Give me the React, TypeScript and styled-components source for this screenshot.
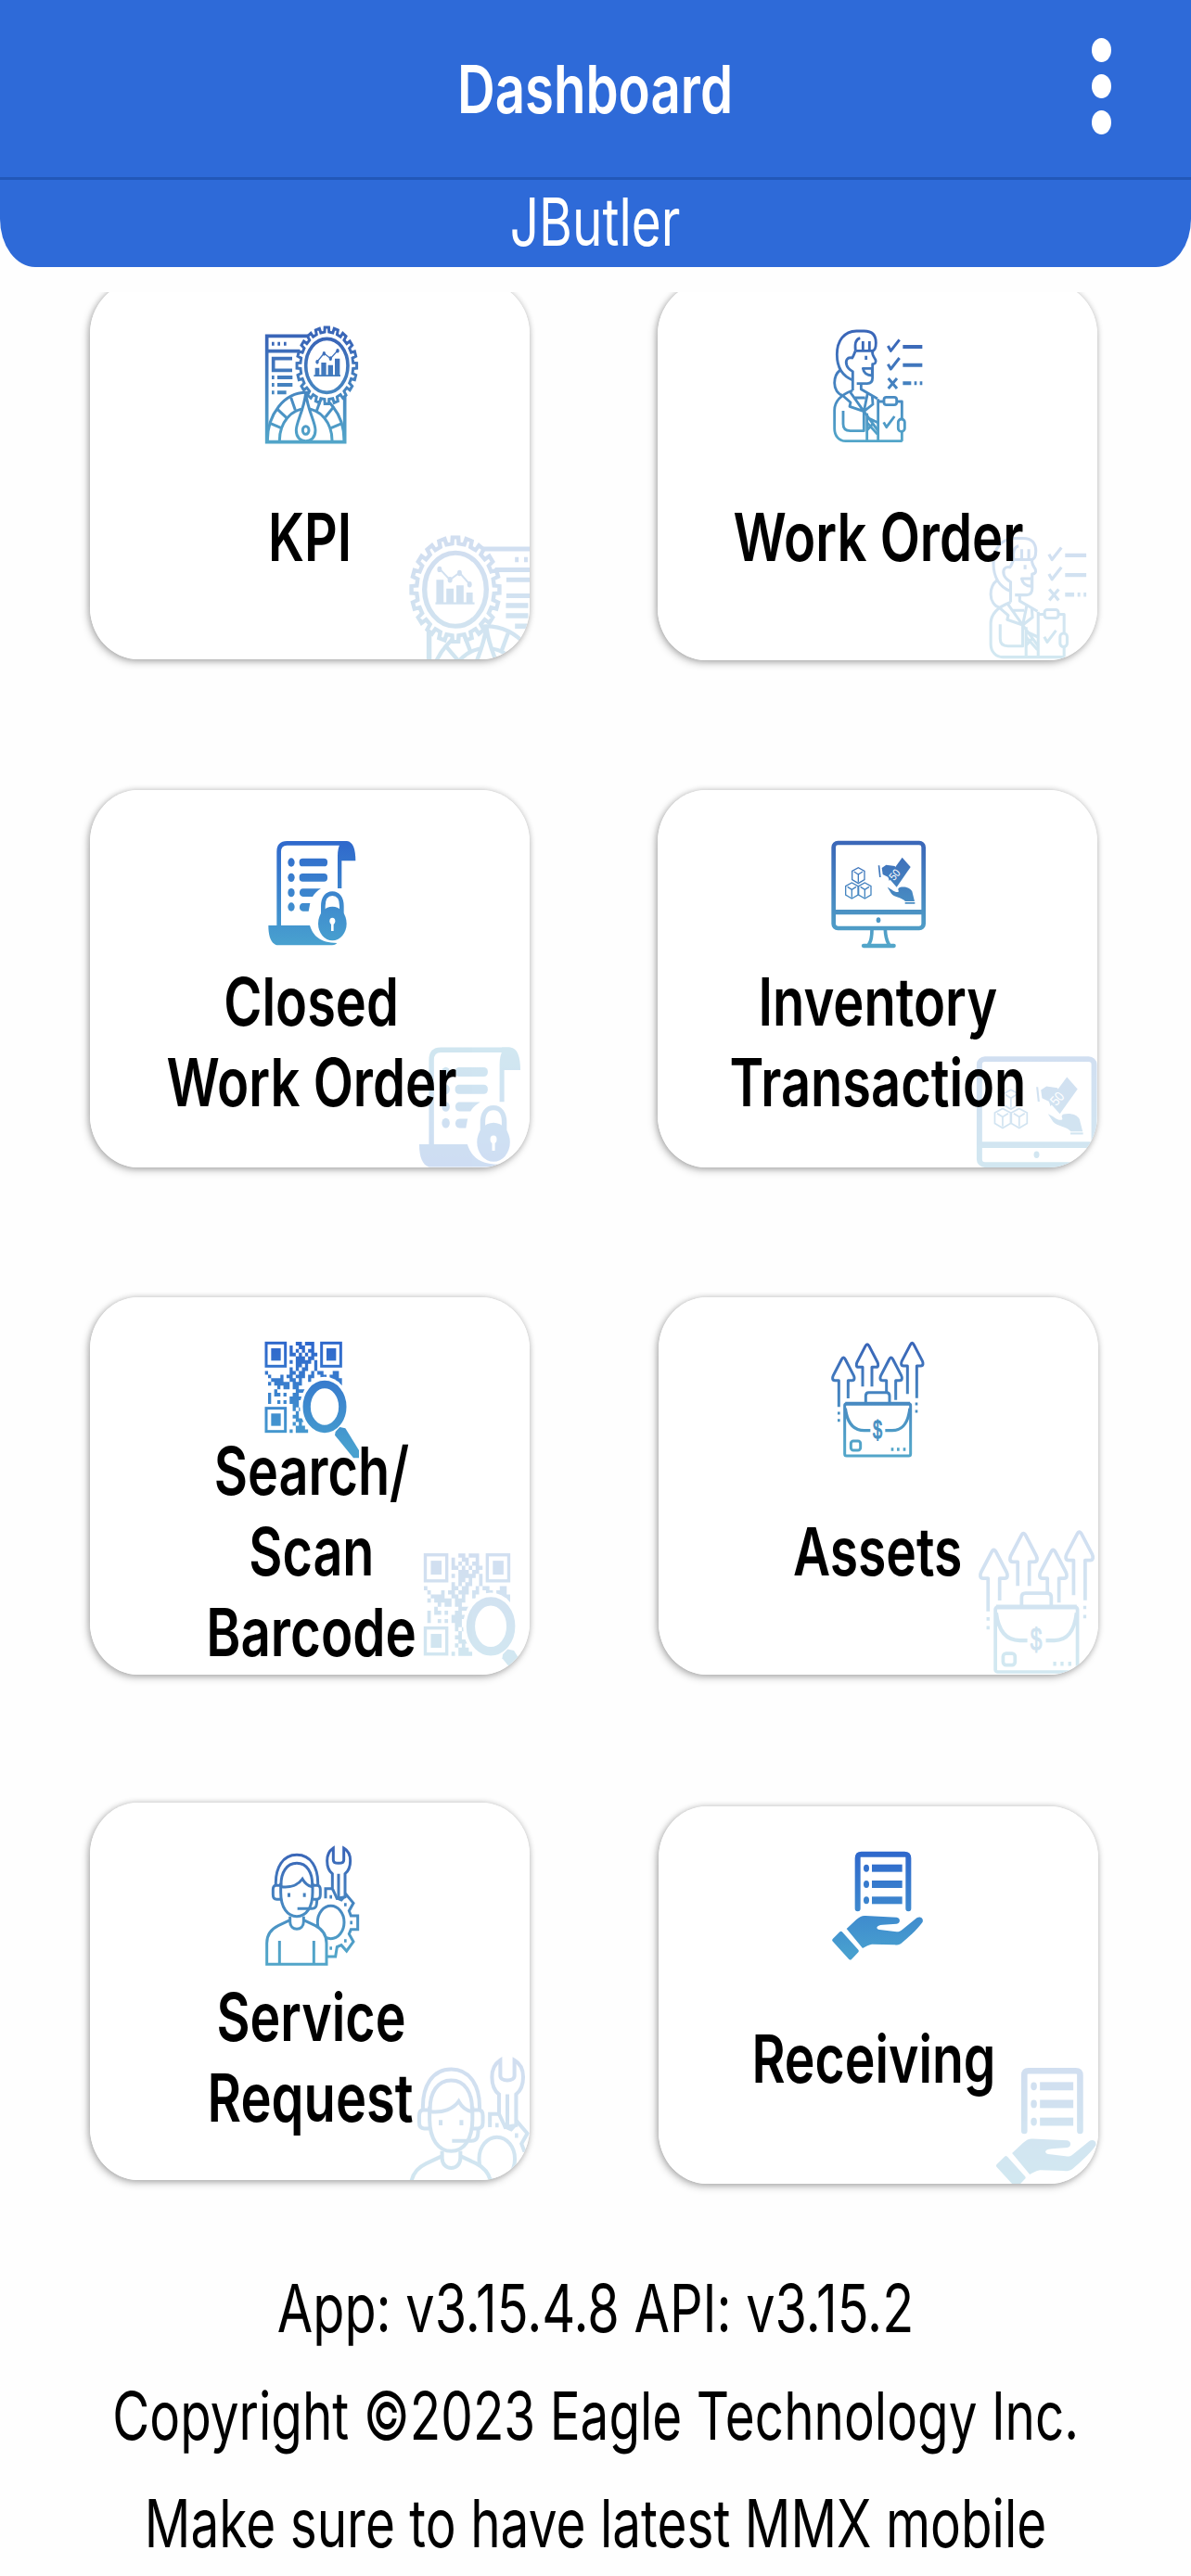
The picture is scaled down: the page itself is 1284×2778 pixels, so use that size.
import type { ReactNode } from "react";
import styled, { createGlobalStyle } from "styled-components";

const GlobalStyle = createGlobalStyle`
  body {
    margin: 0;
    background: #fefefe;
  }
`;

const StyledScreen = styled.div`
  display: flex;
  flex-direction: column;
  width: 1284px;
  height: 2778px;
  overflow: hidden;
  background: #fefefe;
  font-family: Inter, "Liberation Sans", sans-serif;
  font-feature-settings: "calt" 0;
  font-size: 71.5px;
  color: #000;
`;

const StyledHeader = styled.header`
  height: 288px;
  flex-shrink: 0;
  background: #2e6ad8;
  border-radius: 0 0 38px 38px / 0 0 52px 52px;
  color: #fff;
`;

const StyledTitleBar = styled.div`
  display: grid;
  grid-template-columns: 194px 1fr 194px;
  align-items: center;
  justify-items: center;
  height: 191px;
  border-bottom: 3px solid #2257b8;
`;

const StyledTitle = styled.h1`
  grid-column: 2;
  margin: 0;
  font-size: inherit;
  font-weight: 600;
  line-height: 90px;
`;

const StyledMenuButton = styled.button`
  display: flex;
  flex-direction: column;
  gap: 13px;
  padding: 0;
  margin-top: -5px;
  border: 0;
  background: none;

  span {
    width: 21px;
    height: 26px;
    border-radius: 50%;
    background: #fff;
  }
`;

const StyledUser = styled.div`
  display: flex;
  justify-content: center;
  line-height: 91px;
`;

const StyledLine = styled.span<{ $scale: number }>`
  display: block;
  white-space: nowrap;
  transform: scaleX(${(p) => p.$scale});
`;

const StyledScroll = styled.main`
  flex: 1;
  min-height: 0;
  margin-top: 27px;
  overflow: hidden;
`;

const StyledGrid = styled.div`
  display: grid;
  grid-template-columns: 474px 474px;
  grid-auto-rows: 407px;
  gap: 140px 138px;
  margin: -11px 0 0 97px;
`;

const StyledCardShadow = styled.div<{ $x?: number; $y?: number }>`
  width: 474px;
  height: 407px;
  margin: ${(p) => p.$y || 0}px 0 0 ${(p) => p.$x || 0}px;
  border-radius: 52px / 56px;
  box-shadow: -2px 3px 8px rgba(0, 0, 0, 0.26), 0 0 6px rgba(0, 0, 0, 0.18);
`;

const StyledCard = styled.div`
  position: relative;
  height: 100%;
  border-radius: inherit;
  background: #fff;
  overflow: hidden;
`;

const StyledWatermark = styled.svg`
  position: absolute;
  inset: 0;
  width: 100%;
  height: 100%;
`;

const StyledIconSlot = styled.div`
  display: flex;
  justify-content: center;
  height: 97px;
  padding-top: 45px;

  svg {
    flex-shrink: 0;
    width: 110px;
    height: 140px;
  }
`;

const StyledLabel = styled.div<{ $shift: [number, number] }>`
  display: flex;
  flex-direction: column;
  align-items: center;
  justify-content: center;
  height: 264px;
  font-weight: 600;
  line-height: 87px;
  transform: translate(${(p) => p.$shift[0]}px, ${(p) => p.$shift[1]}px);
`;

const StyledFooter = styled.footer`
  display: flex;
  flex-direction: column;
  align-items: center;
  margin-top: 79px;
  line-height: 116px;
`;

// Toothed outline used for the cog on the KPI icon
const cogPath = (cx: number, cy: number, rx: number, ry: number, teeth: number) => {
  const points: string[] = [];
  const step = (Math.PI * 2) / teeth;
  for (let i = 0; i < teeth; i++) {
    const a = i * step - Math.PI / 2;
    [
      [-0.27, 0.88],
      [-0.21, 1],
      [0.21, 1],
      [0.27, 0.88],
    ].forEach(([t, r]) => {
      const x = cx + Math.cos(a + t * step) * rx * r;
      const y = cy + Math.sin(a + t * step) * ry * r;
      points.push(`${x.toFixed(1)} ${y.toFixed(1)}`);
    });
  }
  return `M${points.join("L")}Z`;
};

const KpiArt = ({ ink }) => (
  <g fill="none" stroke={ink} strokeWidth="9">
    <path d="M760 187H623V530H875V380M623 236H730" strokeWidth="11" />
    <path d="M639 212h8M658 212h8M678 212h8" strokeWidth="12" />
    <path d="M705 260H644V298H705" strokeWidth="11" />
    <path
      d="M639 321h8M657 321h49M639 345h8M657 345h49M639 370h8M657 370h29"
      strokeWidth="12"
    />
    <path d="M625 525A124 155 0 0 1 873 525M664 525A85 103 0 0 1 834 525" />
    <path d="M635 470L670 485M655 422L687 452M701 386L715 427M866 470L830 485M840 415L812 450M798 390L784 430" />
    <path
      d="M749 372C742 430 718 466 718 492C718 515 732 527 749 527C766 527 780 515 780 492C780 466 756 430 749 372Z"
      fill="#fff"
    />
    <ellipse cx="749" cy="492" rx="10" ry="13" />
    <path d={cogPath(817, 283, 97, 124, 20)} fill="#fff" />
    <ellipse cx="817" cy="283" rx="68" ry="87" strokeWidth="11" />
    <path d="M786 270L808 243L829 260L852 234" strokeWidth="4" />
    <g fill={ink} stroke="none">
      <ellipse cx="786" cy="271" rx="5" ry="7" />
      <ellipse cx="808" cy="244" rx="5" ry="7" />
      <ellipse cx="829" cy="260" rx="5" ry="7" />
      <ellipse cx="852" cy="235" rx="5" ry="7" />
      <path d="M779 290h14v26h-14zM799 273h16v43h-16zM821 281h16v35h-16zM843 260h16v56h-16zM775 313h86v5h-86z" />
    </g>
  </g>
);

const WorkOrderArt = ({ ink }) => (
  <g fill="none" stroke={ink} strokeWidth="8.5" strokeLinejoin="round">
    <path d="M688 333C655 320 637 290 637 250C637 205 660 175 700 174H725C752 174 763 190 763 212C763 228 760 238 750 238H698" />
    <path d="M712 197C697 200 694 215 697 238M721 207V237M742 207V237" />
    <path d="M697 238C692 247 692 254 686 261C670 257 664 270 668 283C671 295 680 300 688 305V366" />
    <path d="M752 238C749 250 756 256 762 268C764 276 760 281 752 281V325C752 338 745 344 735 344H701" />
    <path d="M731 254v13" />
    <path d="M721 295H751V318C735 318 724 312 721 295Z" />
    <path d="M648 300C632 312 629 325 629 342C629 362 640 378 655 382" />
    <path d="M715 347V362L768 393M688 366C650 380 629 400 629 430V490C629 515 645 530 665 530H848" />
    <path d="M657 432V475C657 490 665 497 680 497H724V436" />
    <path d="M680 372L724 434L678 418L681 405L657 384M690 390H728M736 376L724 434M751 385L753 411L724 434" />
    <path d="M734 440V528M724 434L770 497M738 455L769 470M734 470L768 508M734 495L752 475" />
    <path d="M770 394V528M770 402H789M830 402H847V458M847 500V530" />
    <rect x="789" y="388" width="41" height="25" rx="8" />
    <rect x="835" y="459" width="21" height="40" rx="10" />
    <path d="M788 469L797 485L823 450" />
    <path
      d="M802 222L811 238L839 202M802 281L811 297L839 261M803 327L831 360M831 327L803 360"
      strokeWidth="9"
    />
    <path
      d="M850 225H913M850 284H913M850 343H877M887 343h8M905 343h8"
      strokeWidth="12"
    />
  </g>
);

const ClosedOrderArt = ({ ink }) => (
  <g fill={ink}>
    <path
      d="M662 478V236C662 217 671 208 688 208H880"
      fill="none"
      stroke={ink}
      strokeWidth="14"
    />
    <path d="M858 201H882C902 203 910 228 910 265H865V354H852V250C852 232 855 217 862 207Z" />
    {[270, 319, 368, 414].map((y) => (
      <ellipse key={y} cx="702" cy={y} rx="11" ry="14" />
    ))}
    <rect x="728" y="257" width="91" height="26" rx="11" />
    <rect x="728" y="306" width="91" height="26" rx="11" />
    <path d="M740 355H798C786 362 777 371 771 381H740C725 381 725 355 740 355Z" />
    <path d="M740 402H763L758 428H740C725 428 725 402 740 402Z" />
    <path d="M628 474H762C773 508 795 530 850 531C845 537 838 538 825 538H655C637 532 628 510 628 474Z" />
    <path
      d="M805 440V412C805 386 817 371 835 371C853 371 865 386 865 412V440"
      fill="none"
      stroke={ink}
      strokeWidth="14"
    />
    <ellipse cx="835" cy="468" rx="46" ry="55" />
    <ellipse cx="835" cy="460" rx="9" ry="11" fill="#fff" />
    <path d="M831 462h8v30h-8z" fill="#fff" />
  </g>
);

const cubes = [
  [706, 312],
  [685, 361],
  [727, 361],
];

const InventoryArt = ({ ink }) => (
  <g fill="none" stroke={ink}>
    <rect x="626" y="207" width="291" height="276" rx="14" strokeWidth="14" />
    <path d="M626 431H917" strokeWidth="16" />
    <ellipse cx="771" cy="457" rx="7" ry="9" fill={ink} stroke="none" />
    <path
      d="M750 488C750 510 748 525 739 537M793 488C794 510 798 525 806 537"
      strokeWidth="11"
    />
    <path d="M723 540H821" strokeWidth="13" strokeLinecap="round" />
    {cubes.map(([x, y]) => (
      <path
        key={`${x}-${y}`}
        d={`M${x - 20} ${y - 14}L${x} ${y - 25}L${x + 20} ${y - 14}V${y + 14}L${x} ${y + 26}L${x - 20} ${y + 14}ZM${x - 14} ${y - 12}L${x} ${y - 3}L${x + 14} ${y - 12}M${x} ${y - 3}V${y + 22}`}
        strokeWidth="4"
      />
    ))}
    <g fill={ink} stroke="none">
      <path d="M770 280h5l4 38h-5zM782 288L796 278L824 282L832 300L806 330L803 318L785 309Z" />
      <path d="M848 254L875 285L830 350L802 318Z" />
      <path d="M800 350C814 356 824 368 834 366C842 364 828 356 840 351C856 347 874 352 880 364L888 396H858C846 382 824 384 813 371Z" />
      <path d="M857 399h32v5h-32z" />
    </g>
    <text
      transform="translate(821 331) rotate(-48) scale(0.9 1.05)"
      fill="#fff"
      stroke="none"
      fontFamily="Liberation Sans, sans-serif"
      fontSize="34"
    >
      50
    </text>
  </g>
);

const modules = [
  "..........XX.XXX.........",
  "........X..XX..X.........",
  "........X.X.X.XX.........",
  "........XX.X.X.XX........",
  "..........XXX.XX.........",
  "........X.XXXXX.X........",
  "..........XX.X..X........",
  "........X.X.XX..X........",
  "X.......XX.XX..X.XX...XX.",
  ".X...X.XX.XXX.XX..XX.XXX.",
  "..XXXX..XX.X..X......XXXX",
  ".X.XXXXX.XXX............X",
  "....X.XX.XX..............",
  "...X......XXX............",
  ".X.XX.X..XX..............",
  ".X......XXXX.............",
  ".X..X.X.XXX..............",
  ".........XX..............",
  ".........X.X.............",
  "..........X..............",
  ".........XX..............",
  "..........XXX............",
  ".........X.X.............",
  "..........XXX............",
  "........X.XXXX...........",
];

const modulePath = modules
  .map((row, r) =>
    row
      .split("")
      .map((c, i) => (c === "X" ? `M${617 + i * 9.96} ${187 + r * 11.8}h10v11.9h-10z` : ""))
      .join("")
  )
  .join("");

const BarcodeArt = ({ ink }) => (
  <g fill={ink}>
    <path d={modulePath} />
    {[
      [617, 187],
      [796, 187],
      [617, 398],
    ].map(([x, y]) => (
      <g key={`${x}-${y}`}>
        <rect
          x={x + 4}
          y={y + 4}
          width="62"
          height="75"
          fill="none"
          stroke={ink}
          strokeWidth="9"
        />
        <rect x={x + 20} y={y + 21} width="31" height="40" />
      </g>
    ))}
    <ellipse cx="810" cy="397" rx="80" ry="97" fill="#fff" />
    <ellipse
      cx="810"
      cy="397"
      rx="58"
      ry="72"
      fill="none"
      stroke={ink}
      strokeWidth="25"
    />
    <path d="M843 489L845 478L859 463L877 467L921 538V563H903Z" />
  </g>
);

// x, y of the tip, then the lower end of the left and right stem
const arrows = [
  [658, 236, 398, 370],
  [735, 193, 332, 332],
  [812, 236, 350, 375],
  [880, 189, 356, 369],
];

const AssetsArt = ({ ink }) => (
  <g fill="none" stroke={ink} strokeWidth="9" strokeLinejoin="round">
    {arrows.map(([x, y, left, right]) => (
      <path
        key={x}
        d={`M${x - 15} ${left}V${y + 76}H${x - 28}C${x - 37} ${y + 76} ${x - 36} ${y + 66} ${x - 33} ${y + 60}L${x - 6} ${y + 8}Q${x} ${y - 4} ${x + 6} ${y + 8}L${x + 33} ${y + 60}C${x + 36} ${y + 66} ${x + 37} ${y + 76} ${x + 28} ${y + 76}H${x + 15}V${right}`}
      />
    ))}
    <path d="M639 418h8M639 441h8M890 388h8M890 412h8" strokeWidth="9" />
    <rect x="662" y="387" width="213" height="169" rx="6" />
    <path d="M664 387H873" strokeWidth="12" />
    <path d="M730 383V362C730 354 733 351 740 351H797C804 351 807 354 807 362V383" />
    <path
      d="M664 402C670 450 690 474 725 474H745M873 402C867 450 850 474 815 474H793"
      strokeWidth="10"
    />
    <rect x="682" y="508" width="31" height="30" rx="8" strokeWidth="9" />
    <path d="M812 535h8M831 535h8M851 535h8" strokeWidth="11" />
    <text
      transform="translate(768 499) scale(0.8 1.2)"
      textAnchor="middle"
      fill="#4690c2"
      stroke="#4690c2"
      strokeWidth="2.5"
      fontFamily="Liberation Sans, sans-serif"
      fontSize="68"
    >
      $
    </text>
  </g>
);

const ServiceArt = ({ ink }) => (
  <g fill="none" stroke={ink} strokeWidth="9">
    <path d="M813 350V318H846L850 349L864 355L880 338L903 365L889 390L895 406H917V450H895L889 465L903 490L881 520L864 501L850 507L845 538H818" />
    <ellipse cx="830" cy="427" rx="43" ry="53" />
    <path d="M826 345h8M873 370h8M892 428h8M873 487h8M826 511h8" strokeWidth="11" />
    <path
      d="M835 318V270C822 260 818 245 818 228C818 210 826 195 838 187V225C838 232 845 236 855 236C865 236 872 232 872 225V187C886 195 893 210 893 228C893 245 888 260 876 270V345L850 350Z"
      fill="#fff"
    />
    <path d="M855 270V350" />
    <path
      d="M698 420L660 438C635 450 623 470 623 495V563H816V495C816 470 803 450 780 438L742 420"
      fill="#fff"
    />
    <path d="M664 487V560M775 487V560" />
    <path d="M698 408V425C698 440 708 449 720 449C732 449 742 440 742 425V408" />
    <path d="M668 300V330C668 380 690 408 720 408C750 408 771 380 771 330V300" fill="#fff" />
    <path d="M652 306C650 250 675 209 720 209C765 209 790 250 788 306M669 312C667 265 688 236 720 236C752 236 772 265 770 312" />
    <path d="M670 312C700 316 725 305 738 287C745 300 757 310 770 312" />
    <path d="M667 308H653C645 308 643 315 643 322V338C643 347 647 353 655 353H667M772 308H786C794 308 796 315 796 322V338C796 347 792 353 784 353H772" />
    <path d="M690 339h9M740 339h9" strokeWidth="13" />
    <path d="M722 383H768C782 383 785 375 785 353" />
  </g>
);

const ReceivingArt = ({ ink }) => (
  <g fill={ink}>
    <path
      d="M704 385V222C704 212 708 209 716 209H855C864 209 868 212 868 222V385"
      fill="none"
      stroke={ink}
      strokeWidth="18"
      strokeLinecap="round"
    />
    {[254, 306, 358].map((y) => (
      <g key={y}>
        <ellipse cx="732" cy={y} rx="9" ry="12" />
        <rect x="750" y={y - 12} width="98" height="24" />
      </g>
    ))}
    <path d="M668 450L700 420C712 410 718 407 730 408L830 413C843 415 843 432 830 434L785 437C762 438 762 451 775 453L830 460C838 460 842 458 848 453L895 415C905 408 918 415 914 428C895 455 865 480 845 497C835 503 828 503 820 502L750 500C738 502 730 508 720 513Z" />
    <path
      d="M627 487L650 464L702 522L680 545Z"
      stroke={ink}
      strokeWidth="11"
      strokeLinejoin="round"
    />
  </g>
);

type Tile = {
  id: string;
  Art: (props: { ink: string }) => ReactNode;
  lines: [string, number][];
  shift: [number, number];
  // top left corner of the card in artwork units (three to a pixel)
  origin: [number, number];
  colors: [string, string];
  faded: [string, string];
  watermark: string;
  x?: number;
  y?: number;
};

const dark: [string, string] = ["#3a66b8", "#52a5c9"];
const vivid: [string, string] = ["#2f68cc", "#48a0cf"];
const pale: [string, string] = ["#4a80c6", "#4ca4c6"];

const tiles: Tile[] = [
  {
    id: "kpi",
    Art: KpiArt,
    lines: [["KPI", 0.775]],
    shift: [0, 1],
    origin: [51, 12],
    colors: dark,
    faded: pale,
    watermark: "translate(2434 621) scale(-1.47 1.365)",
  },
  {
    id: "work-order",
    Art: WorkOrderArt,
    lines: [["Work Order", 0.786]],
    shift: [1, 0],
    origin: [57, 18],
    colors: dark,
    faded: pale,
    watermark: "translate(450 656.4) scale(1.088 1.08)",
    y: 1,
  },
  {
    id: "closed-work-order",
    Art: ClosedOrderArt,
    lines: [
      ["Closed", 0.782],
      ["Work Order", 0.786],
    ],
    shift: [2, -2],
    origin: [51, 36],
    colors: vivid,
    faded: ["#48a0c6", "#3f7bd0"],
    watermark: "translate(387.5 638) scale(1.16 1.148)",
    y: 1,
  },
  {
    id: "inventory",
    Art: InventoryArt,
    lines: [
      ["Inventory", 0.784],
      ["Transaction", 0.782],
    ],
    shift: [0, -2],
    origin: [57, 36],
    colors: dark,
    faded: pale,
    watermark: "translate(299.5 650.6) scale(1.275 1.237)",
    y: 1,
  },
  {
    id: "barcode",
    Art: BarcodeArt,
    lines: [
      ["Search/", 0.78],
      ["Scan", 0.778],
      ["Barcode", 0.79],
    ],
    shift: [2, 0],
    origin: [51, 43],
    colors: vivid,
    faded: pale,
    watermark: "translate(440 662) scale(1.12 1.122)",
    y: 1,
  },
  {
    id: "assets",
    Art: AssetsArt,
    lines: [["Assets", 0.772]],
    shift: [-1, 0],
    origin: [60, 43],
    colors: dark,
    faded: pale,
    watermark: "translate(324.5 565) scale(1.246 1.241)",
    x: 1,
    y: 1,
  },
  {
    id: "service",
    Art: ServiceArt,
    lines: [
      ["Service", 0.776],
      ["Request", 0.784],
    ],
    shift: [1, 1],
    origin: [51, 40],
    colors: dark,
    faded: pale,
    watermark: "translate(251 624) scale(1.345 1.332)",
    y: -1,
  },
  {
    id: "receiving",
    Art: ReceivingArt,
    lines: [["Receiving", 0.774]],
    shift: [-5, -2],
    origin: [60, 54],
    colors: vivid,
    faded: pale,
    watermark: "translate(468.5 679) scale(1.1 1.104)",
    x: 1,
    y: 3,
  },
];

const Ink = ({ id, colors }: { id: string; colors: [string, string] }) => (
  <linearGradient id={id} gradientUnits="userSpaceOnUse" x1="0" y1="200" x2="0" y2="530">
    <stop offset="0" stopColor={colors[0]} />
    <stop offset="1" stopColor={colors[1]} />
  </linearGradient>
);

const Card = ({ tile }: { tile: Tile }) => {
  const { id, Art, lines, shift, origin, colors, faded, watermark, x, y } = tile;
  const [ox, oy] = origin;

  return (
    <StyledCardShadow $x={x} $y={y}>
      <StyledCard>
        <StyledWatermark viewBox={`${ox} ${oy} 1422 1221`}>
          <Ink id={`${id}-faded`} colors={faded} />
          <g transform={watermark} opacity="0.25">
            <Art ink={`url(#${id}-faded)`} />
          </g>
        </StyledWatermark>
        <StyledIconSlot>
          <svg viewBox={`${ox + 546} ${oy + 135} 330 420`}>
            <Ink id={id} colors={colors} />
            <Art ink={`url(#${id})`} />
          </svg>
        </StyledIconSlot>
        <StyledLabel $shift={shift}>
          {lines.map(([text, scale]) => (
            <StyledLine key={text} $scale={scale}>
              {text}
            </StyledLine>
          ))}
        </StyledLabel>
      </StyledCard>
    </StyledCardShadow>
  );
};

export default function App() {
  return (
    <StyledScreen>
      <GlobalStyle />
      <StyledHeader>
        <StyledTitleBar>
          <StyledTitle>
            <StyledLine $scale={0.788}>Dashboard</StyledLine>
          </StyledTitle>
          <StyledMenuButton aria-label="Menu">
            <span />
            <span />
            <span />
          </StyledMenuButton>
        </StyledTitleBar>
        <StyledUser>
          <StyledLine $scale={0.768}>JButler</StyledLine>
        </StyledUser>
      </StyledHeader>
      <StyledScroll>
        <StyledGrid>
          {tiles.map((tile) => (
            <Card key={tile.id} tile={tile} />
          ))}
        </StyledGrid>
        <StyledFooter>
          <StyledLine $scale={0.78}>App: v3.15.4.8 API: v3.15.2</StyledLine>
          <StyledLine $scale={0.767}>Copyright ©2023 Eagle Technology Inc.</StyledLine>
          <StyledLine $scale={0.768}>Make sure to have latest MMX mobile</StyledLine>
        </StyledFooter>
      </StyledScroll>
    </StyledScreen>
  );
}
